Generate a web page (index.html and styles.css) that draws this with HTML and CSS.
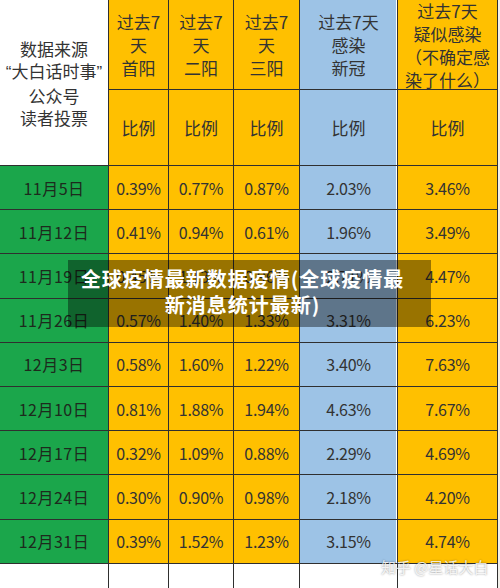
FILE: index.html
```html
<!DOCTYPE html>
<html lang="zh-CN">
<head>
    <meta charset="UTF-8">
    <meta name="viewport" content="width=device-width, initial-scale=1.0">
    <title>全球疫情最新数据疫情</title>
    <link rel="stylesheet" href="styles.css">
</head>
<body>
    <div class="sheet">
        <!-- 表头 -->
        <div class="cell white source">
            <div>数据来源<br><span class="q">“</span>大白话时事<span class="q">”</span><br>公众号<br>读者投票</div>
        </div>
        <div class="cell gold head">过去7<br>天<br>首阳</div>
        <div class="cell gold head">过去7<br>天<br>二阳</div>
        <div class="cell gold head">过去7<br>天<br>三阳</div>
        <div class="cell blue head">过去7天<br>感染<br>新冠</div>
        <div class="cell gold head">过去7天<br>疑似感染<br>（不确定感<br>染了什么）</div>

        <div class="cell gold head">比例</div>
        <div class="cell gold head">比例</div>
        <div class="cell gold head">比例</div>
        <div class="cell blue head">比例</div>
        <div class="cell gold head">比例</div>

        <!-- 数据 -->
        <div class="cell green date">11月5日</div>
        <div class="cell gold num">0.39%</div>
        <div class="cell gold num">0.77%</div>
        <div class="cell gold num">0.87%</div>
        <div class="cell blue num">2.03%</div>
        <div class="cell gold num">3.46%</div>

        <div class="cell green date">11月12日</div>
        <div class="cell gold num">0.41%</div>
        <div class="cell gold num">0.94%</div>
        <div class="cell gold num">0.61%</div>
        <div class="cell blue num">1.96%</div>
        <div class="cell gold num">3.49%</div>

        <div class="cell green date">11月19日</div>
        <div class="cell gold num">0.45%</div>
        <div class="cell gold num">1.13%</div>
        <div class="cell gold num">0.96%</div>
        <div class="cell blue num">2.71%</div>
        <div class="cell gold num">4.47%</div>

        <div class="cell green date">11月26日</div>
        <div class="cell gold num">0.57%</div>
        <div class="cell gold num">1.40%</div>
        <div class="cell gold num">1.33%</div>
        <div class="cell blue num">3.31%</div>
        <div class="cell gold num">6.23%</div>

        <div class="cell green date">12月3日</div>
        <div class="cell gold num">0.58%</div>
        <div class="cell gold num">1.60%</div>
        <div class="cell gold num">1.22%</div>
        <div class="cell blue num">3.40%</div>
        <div class="cell gold num">7.63%</div>

        <div class="cell green date">12月10日</div>
        <div class="cell gold num">0.81%</div>
        <div class="cell gold num">1.88%</div>
        <div class="cell gold num">1.94%</div>
        <div class="cell blue num">4.63%</div>
        <div class="cell gold num">7.67%</div>

        <div class="cell green date">12月17日</div>
        <div class="cell gold num">0.32%</div>
        <div class="cell gold num">1.09%</div>
        <div class="cell gold num">0.88%</div>
        <div class="cell blue num">2.29%</div>
        <div class="cell gold num">4.69%</div>

        <div class="cell green date">12月24日</div>
        <div class="cell gold num">0.30%</div>
        <div class="cell gold num">0.90%</div>
        <div class="cell gold num">0.98%</div>
        <div class="cell blue num">2.18%</div>
        <div class="cell gold num">4.20%</div>

        <div class="cell green date">12月31日</div>
        <div class="cell gold num">0.39%</div>
        <div class="cell gold num">1.52%</div>
        <div class="cell gold num">1.23%</div>
        <div class="cell blue num">3.15%</div>
        <div class="cell gold num">4.74%</div>

        <!-- 空行 -->
        <div class="cell white"></div>
        <div class="cell white"></div>
        <div class="cell white"></div>
        <div class="cell white"></div>
        <div class="cell white"></div>
        <div class="cell white"></div>
    </div>

    <div class="banner">全球疫情最新数据疫情(全球疫情最<br>新消息统计最新)</div>
    <div class="watermark">知乎 @星话大白</div>
</body>
</html>
```

FILE: styles.css
```css
html, body {
    margin: 0;
    height: 588px;
    overflow: hidden;
}

body {
    font-family: "Noto Sans CJK SC", sans-serif;
    background: #f3f1ea;
    color: #333;
}

.sheet {
    display: grid;
    grid-template-columns: 108px 59px 64px 65px 97px 99px;
    grid-template-rows: 89px 75px repeat(9, 43.2px) 40px;
    gap: 1px;
    width: 497px;
    background: #2f2f2f;
    border-right: 1px solid #2f2f2f;
}

.cell {
    display: flex;
    align-items: center;
    justify-content: center;
    text-align: center;
}

.white { background: #fff; }
.gold { background: #ffc000; }
.green { background: #1ba64b; }
.blue {
    background: #9dc3e6;
    box-shadow: inset -1px 0 #fff;
}

.source {
    grid-row: span 2;
    font-size: 17px;
    line-height: 22.5px;
    padding-top: 2px;
}

.q {
    font-family: "Liberation Sans", sans-serif;
}

.head {
    font-size: 17px;
    line-height: 23px;
}

.date {
    font-size: 16px;
    letter-spacing: 0.5px;
    color: #1d2a1d;
}

.num {
    font-size: 16px;
    letter-spacing: -0.3px;
    color: #333;
}

.banner {
    position: absolute;
    left: 68px;
    top: 260px;
    width: 349px;
    height: 53px;
    padding: 6px 14px 8px 0;
    background: rgba(0, 0, 0, 0.4);
    color: #fff;
    font-size: 20px;
    font-weight: bold;
    line-height: 26px;
    letter-spacing: 1px;
    text-align: center;
}

.watermark {
    position: absolute;
    left: 381px;
    top: 556px;
    font-size: 15px;
    line-height: 22px;
    color: rgba(255, 255, 255, 0.85);
    text-shadow: 0 0 2px rgba(0, 0, 0, 0.45);
}
```
